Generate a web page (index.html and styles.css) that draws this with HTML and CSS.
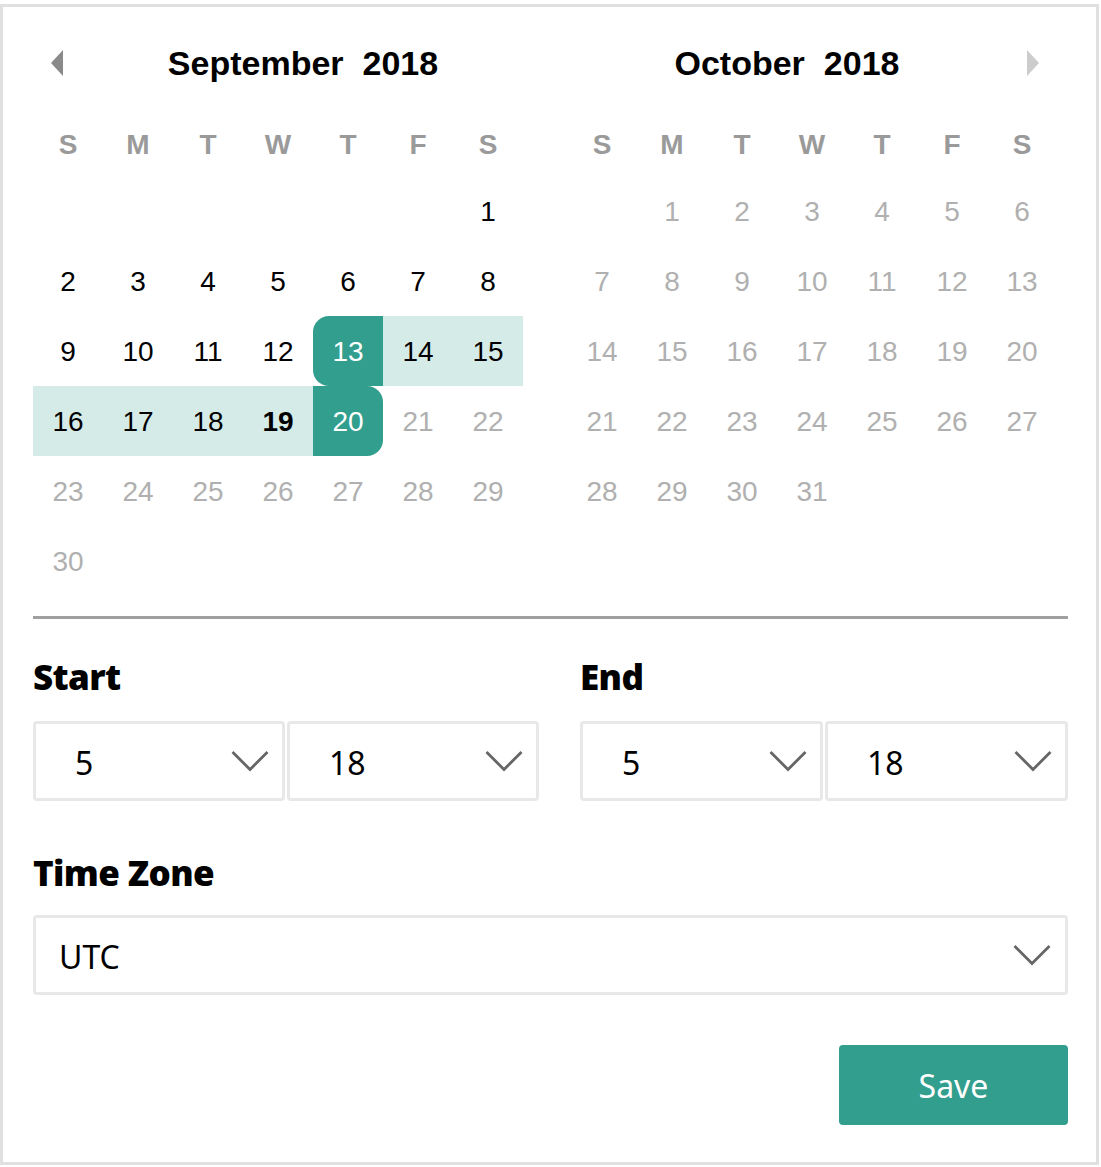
FILE: index.html
```html
<!DOCTYPE html>
<html>
<head>
<meta charset="utf-8">
<link rel="stylesheet" href="styles.css">
</head>
<body>
<div class="frame">
  <div class="months">
    <div class="month">
      <div class="mhead">
        <div class="nav nav-prev"><svg width="14" height="28" viewBox="0 0 14 28"><path d="M13 1 L1 14 L13 27 Z" fill="#8a8a8a"/></svg></div>
        <div class="mtitle"><span>September</span><span>2018</span></div>
      </div>
      <div class="grid">
        <div class="wd">S</div><div class="wd">M</div><div class="wd">T</div><div class="wd">W</div><div class="wd">T</div><div class="wd">F</div><div class="wd">S</div>
      </div>
      <div class="grid days">
        <div class="d"></div><div class="d"></div><div class="d"></div><div class="d"></div><div class="d"></div><div class="d"></div><div class="d">1</div>
        <div class="d">2</div><div class="d">3</div><div class="d">4</div><div class="d">5</div><div class="d">6</div><div class="d">7</div><div class="d">8</div>
        <div class="d">9</div><div class="d">10</div><div class="d">11</div><div class="d">12</div><div class="d sel sel-start">13</div><div class="d range">14</div><div class="d range">15</div>
        <div class="d range">16</div><div class="d range">17</div><div class="d range">18</div><div class="d range today">19</div><div class="d sel sel-end">20</div><div class="d off">21</div><div class="d off">22</div>
        <div class="d off">23</div><div class="d off">24</div><div class="d off">25</div><div class="d off">26</div><div class="d off">27</div><div class="d off">28</div><div class="d off">29</div>
        <div class="d off">30</div>
      </div>
    </div>
    <div class="month">
      <div class="mhead mhead-right">
        <div class="mtitle"><span>October</span><span>2018</span></div>
        <div class="nav nav-next"><svg width="14" height="28" viewBox="0 0 14 28"><path d="M1 1 L13 14 L1 27 Z" fill="#cccccc"/></svg></div>
      </div>
      <div class="grid">
        <div class="wd">S</div><div class="wd">M</div><div class="wd">T</div><div class="wd">W</div><div class="wd">T</div><div class="wd">F</div><div class="wd">S</div>
      </div>
      <div class="grid days">
        <div class="d"></div><div class="d off">1</div><div class="d off">2</div><div class="d off">3</div><div class="d off">4</div><div class="d off">5</div><div class="d off">6</div>
        <div class="d off">7</div><div class="d off">8</div><div class="d off">9</div><div class="d off">10</div><div class="d off">11</div><div class="d off">12</div><div class="d off">13</div>
        <div class="d off">14</div><div class="d off">15</div><div class="d off">16</div><div class="d off">17</div><div class="d off">18</div><div class="d off">19</div><div class="d off">20</div>
        <div class="d off">21</div><div class="d off">22</div><div class="d off">23</div><div class="d off">24</div><div class="d off">25</div><div class="d off">26</div><div class="d off">27</div>
        <div class="d off">28</div><div class="d off">29</div><div class="d off">30</div><div class="d off">31</div><div class="d"></div><div class="d"></div><div class="d"></div>
        <div class="d"></div>
      </div>
    </div>
  </div>

  <div class="sep"></div>

  <div class="times">
    <div class="tgroup">
      <div class="label">Start</div>
      <div class="pair">
        <div class="select"><span class="val">5</span><svg class="chev" width="38" height="22" viewBox="0 0 38 22"><path d="M1.5 2 L19 19.5 L36.5 2" fill="none" stroke="#666" stroke-width="2.8"/></svg></div>
        <div class="select"><span class="val">18</span><svg class="chev" width="38" height="22" viewBox="0 0 38 22"><path d="M1.5 2 L19 19.5 L36.5 2" fill="none" stroke="#666" stroke-width="2.8"/></svg></div>
      </div>
    </div>
    <div class="tgroup">
      <div class="label">End</div>
      <div class="pair">
        <div class="select"><span class="val">5</span><svg class="chev" width="38" height="22" viewBox="0 0 38 22"><path d="M1.5 2 L19 19.5 L36.5 2" fill="none" stroke="#666" stroke-width="2.8"/></svg></div>
        <div class="select"><span class="val">18</span><svg class="chev" width="38" height="22" viewBox="0 0 38 22"><path d="M1.5 2 L19 19.5 L36.5 2" fill="none" stroke="#666" stroke-width="2.8"/></svg></div>
      </div>
    </div>
  </div>

  <div class="label tz-label">Time Zone</div>
  <div class="select select-wide"><span class="val">UTC</span><svg class="chev" width="38" height="22" viewBox="0 0 38 22"><path d="M1.5 2 L19 19.5 L36.5 2" fill="none" stroke="#666" stroke-width="2.8"/></svg></div>

  <div class="actions">
    <button class="save">Save</button>
  </div>
</div>
</body>
</html>
```

FILE: styles.css
```css
html, body {
  margin: 0;
  padding: 0;
  background: #fff;
}
body {
  padding-top: 4px;
  font-family: "Liberation Sans", Arial, sans-serif;
}
.frame {
  width: 1099px;
  height: 1161px;
  box-sizing: border-box;
  border: 3px solid #e0e0e0;
  padding: 26px 28px 0 30px;
}
.months {
  display: flex;
  gap: 44px;
}
.month {
  width: 490px;
}
.mhead {
  display: flex;
  height: 60px;
  align-items: center;
  margin-bottom: 21px;
}
.nav {
  width: 50px;
  height: 60px;
  display: flex;
  align-items: center;
  justify-content: center;
  flex: none;
}
.nav-prev svg { margin-left: -2px; }
.nav-next svg { margin-left: 1px; }
.mtitle {
  flex: 1;
  display: flex;
  justify-content: center;
  gap: 19px;
  font-weight: bold;
  font-size: 34px;
  color: #000;
}
.grid {
  display: grid;
  grid-template-columns: repeat(7, 70px);
}
.wd {
  height: 62px;
  display: flex;
  align-items: center;
  justify-content: center;
  font-weight: bold;
  font-size: 28px;
  color: #9a9a9a;
}
.d {
  height: 70px;
  display: flex;
  align-items: center;
  justify-content: center;
  font-size: 28px;
  color: #000;
  padding-top: 2px;
  box-sizing: border-box;
}
.d.off { color: #b0b0b0; }
.d.range { background: #d5ebe8; }
.d.today { font-weight: bold; }
.d.sel {
  background: #319e8e;
  color: #fff;
}
.d.sel-start { border-radius: 16px 0 0 16px; }
.d.sel-end { border-radius: 0 16px 16px 0; }

.sep {
  margin-top: 20px;
  width: 1035px;
  height: 3px;
  background: #a0a0a0;
}
.times {
  display: grid;
  grid-template-columns: 506px 488px;
  column-gap: 41px;
  margin-top: 36px;
}
.label {
  font-family: "Noto Sans", "Open Sans", sans-serif;
  font-weight: 900;
  font-size: 35px;
  line-height: 44px;
  color: #000;
  letter-spacing: -0.6px;
}
.pair {
  display: flex;
  gap: 2px;
  margin-top: 22px;
}
.pair .select { flex: 1; }
.select {
  height: 80px;
  box-sizing: border-box;
  border: 3px solid #e8e8e8;
  border-radius: 4px;
  display: flex;
  align-items: center;
  justify-content: space-between;
  padding: 0 13px 0 39px;
  font-family: "Noto Sans", "Open Sans", sans-serif;
  font-size: 32px;
  color: #000;
}
.val { margin-top: 2px; }
.tz-label {
  margin-top: 50px;
}
.select-wide {
  margin-top: 20px;
  width: 1035px;
  padding-left: 23px;
  padding-right: 14px;
}
.actions {
  display: flex;
  justify-content: flex-end;
  margin-top: 50px;
  width: 1035px;
}
.save {
  width: 229px;
  height: 80px;
  border: none;
  border-radius: 4px;
  background: #319e8e;
  color: #fff;
  font-family: "Noto Sans", "Open Sans", sans-serif;
  font-size: 32px;
  padding: 0;
}
```
